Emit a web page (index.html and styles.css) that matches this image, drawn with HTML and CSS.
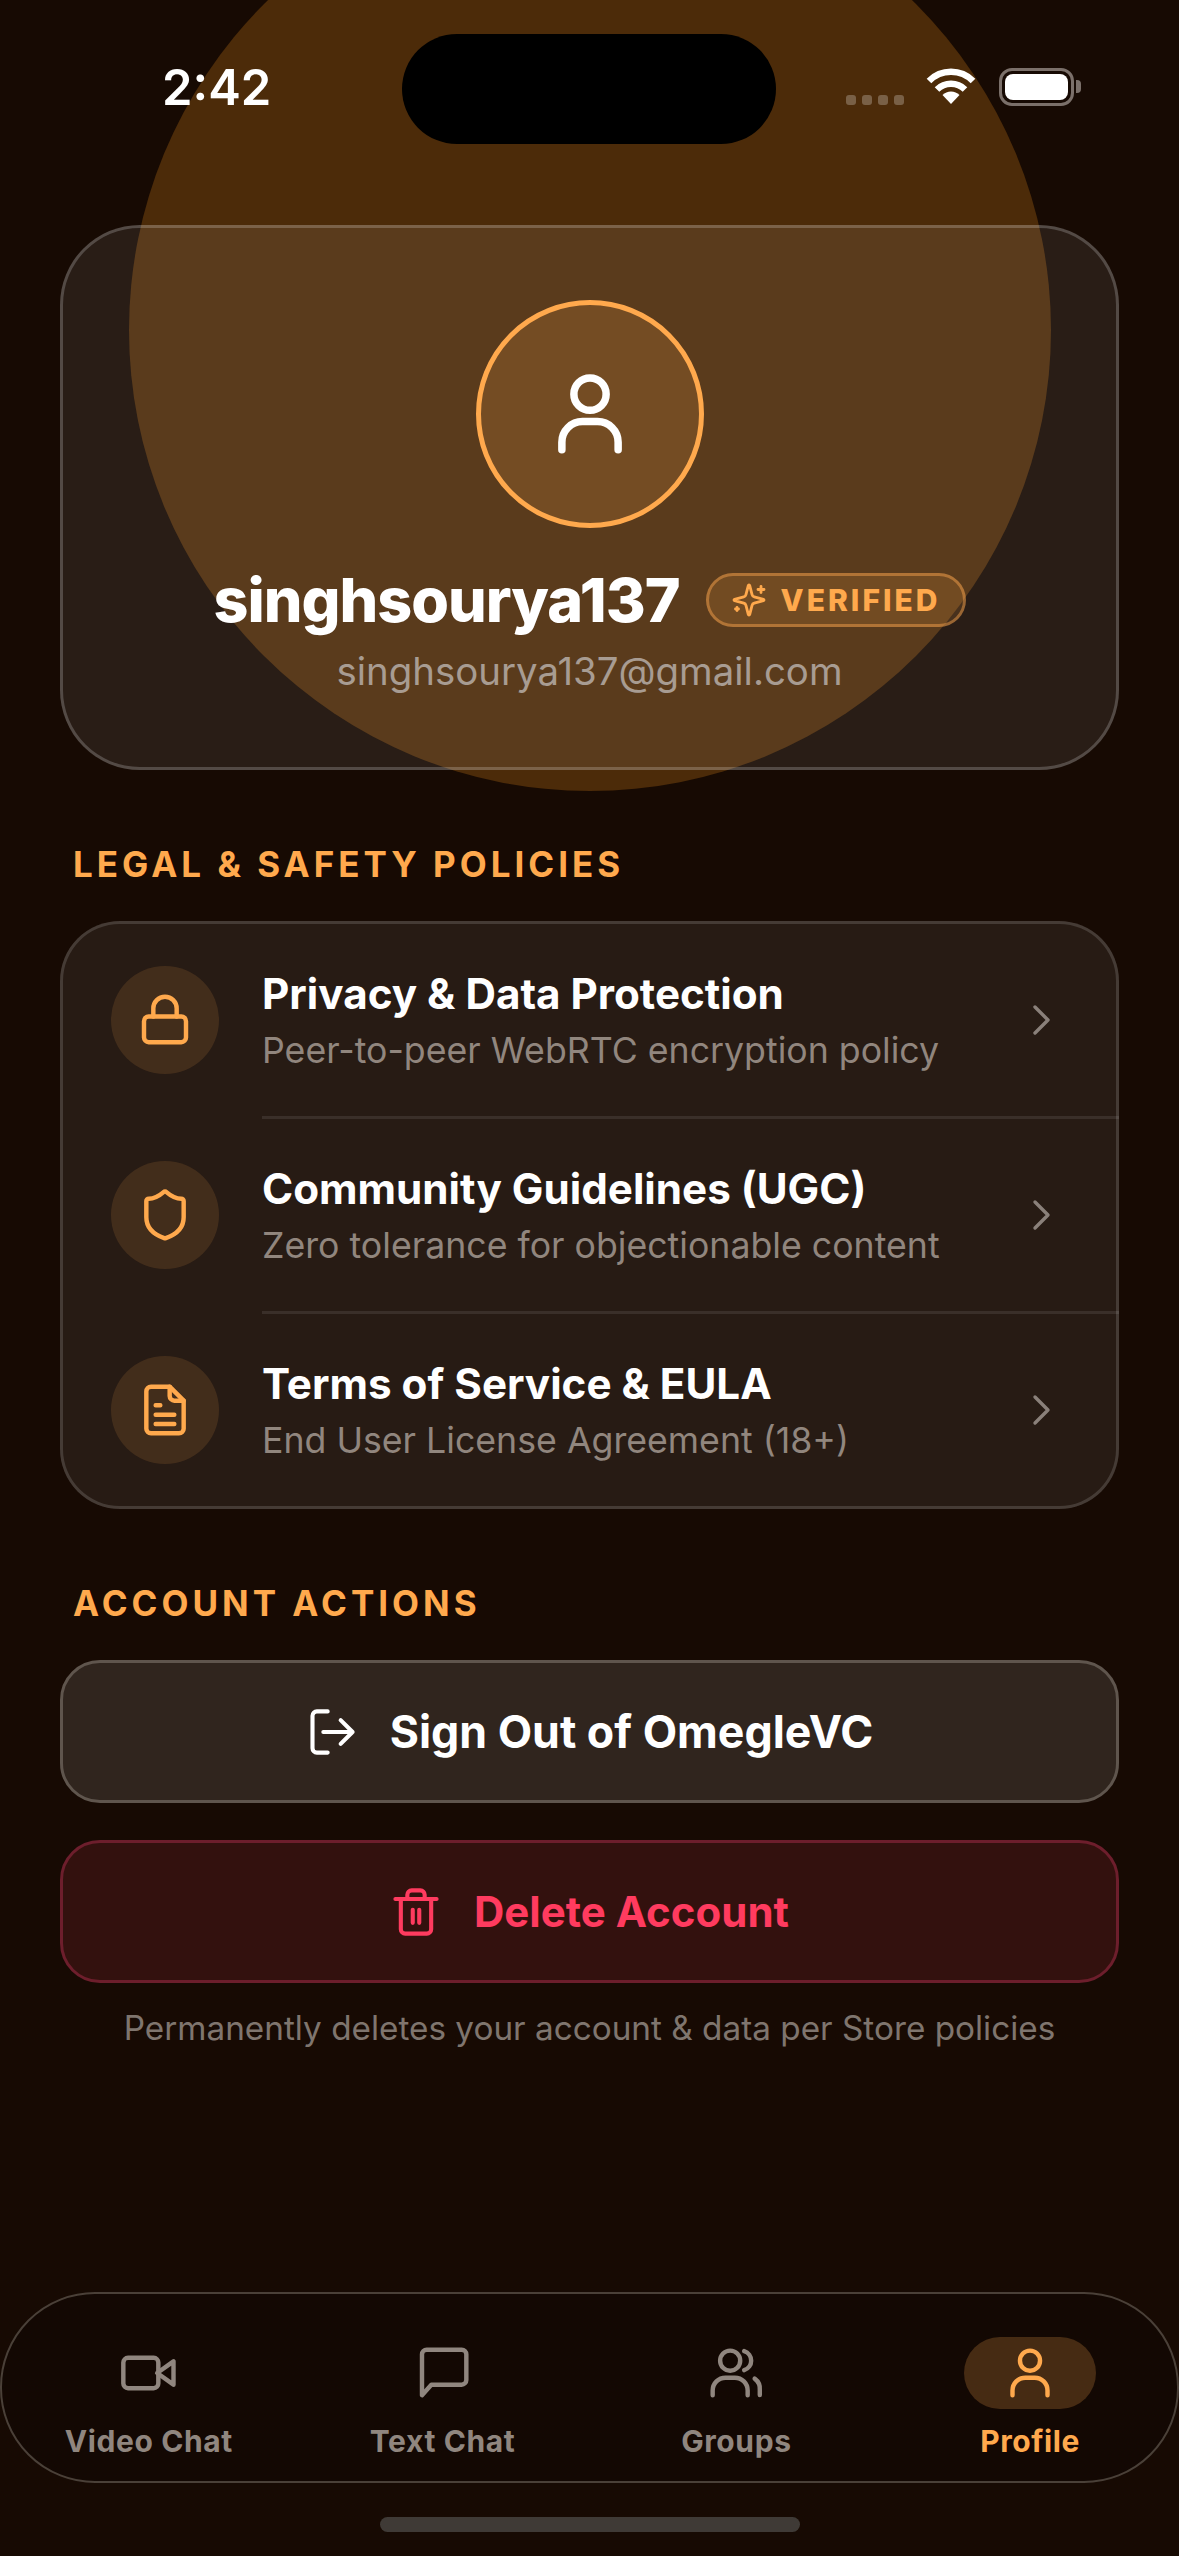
FILE: index.html
```html
<!DOCTYPE html>
<html lang="en">
  <head>
    <meta charset="UTF-8" />
    <meta name="viewport" content="width=device-width, initial-scale=1.0" />
    <title>Profile</title>
    <link rel="stylesheet" href="styles.css">
  </head>

  <body>
    <div class="glow"></div>
    <div class="island"></div>

    <header class="status-bar">
      <span class="status-time">2:42</span>
      <div class="status-icons">
        <div class="signal-dots"><i></i><i></i><i></i><i></i></div>
        <svg class="wifi-icon" viewBox="0 0 52 37">
          <path d="M4 14A31 31 0 0 1 48 14M12 22.5A20 20 0 0 1 40 22.5" fill="none" stroke="#fff" stroke-width="6.5" />
          <path d="M26 37L17.5 28A12 12 0 0 1 34.5 28Z" fill="#fff" />
        </svg>
        <div class="battery"><div class="battery-fill"></div></div>
        <div class="battery-tip"></div>
      </div>
    </header>

    <main class="content">
      <section class="profile-card">
        <div class="avatar">
          <svg class="avatar-icon icon" viewBox="0 0 24 24">
            <circle cx="12" cy="6.7" r="4.3" />
            <path d="M4.5 21.5v-2a5.5 5.5 0 0 1 5.5-5.5h4a5.5 5.5 0 0 1 5.5 5.5v2" />
          </svg>
        </div>
        <div class="name-row">
          <h1 class="profile-name">singhsourya137</h1>
          <span class="verified-badge">
            <svg class="sparkle-icon icon" viewBox="0 0 24 24">
              <path d="M9.937 15.5A2 2 0 0 0 8.5 14.063l-6.135-1.582a.5.5 0 0 1 0-.962L8.5 9.936A2 2 0 0 0 9.937 8.5l1.582-6.135a.5.5 0 0 1 .963 0L14.063 8.5A2 2 0 0 0 15.5 9.937l6.135 1.581a.5.5 0 0 1 0 .964L15.5 14.063a2 2 0 0 0-1.437 1.437l-1.582 6.135a.5.5 0 0 1-.963 0z" />
              <path d="M20 3v4M22 5h-4M4 17v2M5 18H3" />
            </svg>
            VERIFIED
          </span>
        </div>
        <p class="profile-email">singhsourya137@gmail.com</p>
      </section>

      <h2 class="section-title">LEGAL &amp; SAFETY POLICIES</h2>
      <section class="policy-list">
        <div class="policy-row">
          <div class="policy-icon">
            <svg class="icon" viewBox="0 0 24 24">
              <rect x="3" y="10.5" width="18" height="11" rx="2" />
              <path d="M7 10.5V7a5 5 0 0 1 10 0v3.5" />
            </svg>
          </div>
          <div class="policy-text">
            <h3 class="policy-title">Privacy &amp; Data Protection</h3>
            <p class="policy-sub">Peer-to-peer WebRTC encryption policy</p>
          </div>
          <svg class="chevron icon" viewBox="0 0 24 34"><path d="M6 4l13 13L6 30" /></svg>
        </div>
        <div class="policy-row">
          <div class="policy-icon">
            <svg class="icon" viewBox="0 0 24 24">
              <path d="M20 13c0 5-3.5 7.5-7.66 8.95a1 1 0 0 1-.67-.01C7.5 20.5 4 18 4 13V6a1 1 0 0 1 1-1c2 0 4.5-1.2 6.24-2.72a1.17 1.17 0 0 1 1.52 0C14.51 3.81 17 5 19 5a1 1 0 0 1 1 1z" />
            </svg>
          </div>
          <div class="policy-text">
            <h3 class="policy-title">Community Guidelines (UGC)</h3>
            <p class="policy-sub">Zero tolerance for objectionable content</p>
          </div>
          <svg class="chevron icon" viewBox="0 0 24 34"><path d="M6 4l13 13L6 30" /></svg>
        </div>
        <div class="policy-row">
          <div class="policy-icon">
            <svg class="icon" viewBox="0 0 24 24">
              <path d="M14 2H6a2 2 0 0 0-2 2v16a2 2 0 0 0 2 2h12a2 2 0 0 0 2-2V8z" />
              <path d="M14 2v4a2 2 0 0 0 2 2h4M8 10h2M8 14h8M8 18h8" />
            </svg>
          </div>
          <div class="policy-text">
            <h3 class="policy-title">Terms of Service &amp; EULA</h3>
            <p class="policy-sub">End User License Agreement (18+)</p>
          </div>
          <svg class="chevron icon" viewBox="0 0 24 34"><path d="M6 4l13 13L6 30" /></svg>
        </div>
      </section>

      <h2 class="section-title section-title-actions">ACCOUNT ACTIONS</h2>
      <button class="action-button sign-out">
        <svg class="icon" viewBox="0 0 24 24">
          <path d="M10 2.5H5a2 2 0 0 0-2 2v15a2 2 0 0 0 2 2h5" />
          <path d="M8 12h13.5M16 6.5l5.5 5.5-5.5 5.5" />
        </svg>
        Sign Out of OmegleVC
      </button>
      <button class="action-button delete">
        <svg class="icon" viewBox="0 0 24 24">
          <path d="M2.5 6h19M5 6v14a2 2 0 0 0 2 2h10a2 2 0 0 0 2-2V6M8 6V4a2 2 0 0 1 2-2h4a2 2 0 0 1 2 2v2M10.5 11v6M13.5 11v6" />
        </svg>
        Delete Account
      </button>
      <p class="delete-note">Permanently deletes your account &amp; data per Store policies</p>
    </main>

    <nav class="tab-bar">
      <div class="tab">
        <div class="tab-icon">
          <svg class="icon" viewBox="0 0 24 24">
            <rect x="1" y="5.5" width="15" height="13" rx="2" />
            <path d="M15.5 12l7-5v10z" />
          </svg>
        </div>
        <span class="tab-label">Video Chat</span>
      </div>
      <div class="tab">
        <div class="tab-icon">
          <svg class="icon" viewBox="0 0 24 24">
            <path d="M22 15a2 2 0 0 1-2 2H7l-4 4.5V4a2 2 0 0 1 2-2h15a2 2 0 0 1 2 2z" />
          </svg>
        </div>
        <span class="tab-label">Text Chat</span>
      </div>
      <div class="tab">
        <div class="tab-icon">
          <svg class="icon" viewBox="0 0 24 24">
            <circle cx="9.5" cy="6.7" r="4.3" />
            <path d="M2 21.5v-2a5.5 5.5 0 0 1 5.5-5.5h4a5.5 5.5 0 0 1 5.5 5.5v2M15.5 2.6a4.3 4.3 0 0 1 0 8.2M20 14.4a5.5 5.5 0 0 1 2.2 5v2" />
          </svg>
        </div>
        <span class="tab-label">Groups</span>
      </div>
      <div class="tab tab-active">
        <div class="tab-icon">
          <svg class="icon" viewBox="0 0 24 24">
            <circle cx="12" cy="6.7" r="4.3" />
            <path d="M4.5 21.5v-2a5.5 5.5 0 0 1 5.5-5.5h4a5.5 5.5 0 0 1 5.5 5.5v2" />
          </svg>
        </div>
        <span class="tab-label">Profile</span>
      </div>
    </nav>

    <div class="home-indicator"></div>
  </body>
</html>
```

FILE: styles.css
```css
* {
  box-sizing: border-box;
}

body {
  position: relative;
  display: flex;
  flex-direction: column;
  width: 1179px;
  height: 2556px;
  margin: 0;
  overflow: hidden;
  background-color: #170a03;
  color: #fff;
  font-family: Inter, "Noto Sans", sans-serif;
}

h1,
h2,
h3,
p {
  margin: 0;
}

.icon {
  fill: none;
  stroke: currentColor;
  stroke-width: 1.9;
  stroke-linecap: round;
  stroke-linejoin: round;
}

.glow {
  position: absolute;
  left: 129px;
  top: -131px;
  width: 922px;
  height: 922px;
  border-radius: 50%;
  background-color: #4c2b09;
}

.island {
  position: absolute;
  left: 402px;
  top: 34px;
  width: 374px;
  height: 110px;
  border-radius: 55px;
  background-color: #000;
}

.status-bar {
  position: relative;
  display: flex;
  justify-content: space-between;
  height: 225px;
  padding: 58px 98px 0 162px;
}

.status-time {
  font-size: 49px;
  font-weight: 600;
  line-height: 60px;
}

.status-icons {
  display: flex;
  align-items: flex-start;
  height: 60px;
  padding-top: 9px;
}

.signal-dots {
  display: flex;
  gap: 6px;
  margin: 28px 21px 0 0;
}

.signal-dots i {
  width: 10px;
  height: 10px;
  border-radius: 3px;
  background-color: rgba(255, 255, 255, 0.25);
}

.wifi-icon {
  width: 52px;
  height: 37px;
  margin-right: 22px;
}

.battery {
  width: 75px;
  height: 38px;
  margin-top: 1px;
  padding: 3px;
  border: 3px solid #7b706a;
  border-radius: 13px;
}

.battery-fill {
  height: 100%;
  border-radius: 8px;
  background-color: #fff;
}

.battery-tip {
  width: 5px;
  height: 13px;
  margin: 13px 0 0 2px;
  border-radius: 0 4px 4px 0;
  background-color: #7b706a;
}

.content {
  position: relative;
  flex: 1;
  padding: 0 60px;
}

.profile-card {
  display: flex;
  flex-direction: column;
  align-items: center;
  height: 545px;
  padding-top: 72px;
  border: 3px solid rgba(255, 255, 255, 0.2);
  border-radius: 80px;
  background-color: rgba(255, 255, 255, 0.08);
}

.avatar {
  display: flex;
  align-items: center;
  justify-content: center;
  width: 228px;
  height: 228px;
  border: 5px solid #ffa94d;
  border-radius: 50%;
  background-color: rgba(255, 169, 77, 0.16);
}

.avatar-icon {
  width: 90px;
  height: 90px;
  color: #fff;
  stroke-width: 2;
}

.name-row {
  display: flex;
  align-items: center;
  gap: 26px;
  margin-top: 37px;
}

.profile-name {
  font-size: 61px;
  font-weight: 800;
  line-height: 70px;
  letter-spacing: -1px;
}

.verified-badge {
  display: flex;
  align-items: center;
  gap: 14px;
  height: 54px;
  padding: 0 22px;
  border: 3px solid rgba(255, 169, 77, 0.45);
  border-radius: 27px;
  background-color: rgba(255, 169, 77, 0.15);
  color: #ffa94d;
  font-size: 30px;
  font-weight: 800;
  letter-spacing: 3px;
}

.sparkle-icon {
  width: 36px;
  height: 36px;
}

.profile-email {
  margin-top: 14px;
  color: #a89c92;
  font-size: 38.4px;
  line-height: 44px;
}

.section-title {
  margin: 74px 0 0 13px;
  color: #ffa94d;
  font-size: 35px;
  font-weight: 700;
  line-height: 40px;
  letter-spacing: 4px;
}

.policy-list {
  margin-top: 37px;
  padding: 1px 0 2px;
  border-radius: 60px;
  background-color: rgba(255, 255, 255, 0.07);
  box-shadow: inset 0 0 0 3px rgba(255, 255, 255, 0.14);
}

.policy-row {
  position: relative;
  display: flex;
  align-items: center;
  height: 195px;
  padding: 0 66px 0 51px;
}

.policy-row + .policy-row::before {
  content: "";
  position: absolute;
  left: 202px;
  right: 0;
  top: -1px;
  height: 3px;
  background-color: rgba(255, 255, 255, 0.09);
}

.policy-icon {
  display: flex;
  align-items: center;
  justify-content: center;
  flex: none;
  width: 108px;
  height: 108px;
  margin-right: 43px;
  border-radius: 50%;
  background-color: rgba(255, 169, 77, 0.13);
  color: #ffa94d;
}

.policy-icon svg {
  width: 56px;
  height: 56px;
}

.policy-text {
  flex: 1;
}

.policy-title {
  font-size: 42.2px;
  font-weight: 700;
  line-height: 52px;
}

.policy-sub {
  margin-top: 8px;
  color: #91867e;
  font-size: 35.7px;
  line-height: 44px;
}

.chevron {
  width: 24px;
  height: 34px;
  color: #8a807a;
  stroke-width: 3.4;
}

.action-button {
  display: flex;
  align-items: center;
  justify-content: center;
  gap: 32px;
  width: 100%;
  height: 143px;
  border-radius: 40px;
  font-family: inherit;
  font-weight: 700;
}

.action-button svg {
  width: 52px;
  height: 52px;
}

.sign-out {
  margin-top: 37px;
  border: 3px solid #5f554d;
  background-color: #30251e;
  color: #fff;
  font-size: 44.7px;
}

.delete {
  margin-top: 37px;
  border: 3px solid #6d1e2c;
  background-color: #33110e;
  color: #ff3b5f;
  font-size: 42px;
}

.delete-note {
  margin-top: 25px;
  color: #7f756e;
  font-size: 33.3px;
  line-height: 40px;
  text-align: center;
}

.tab-bar {
  position: absolute;
  left: 0;
  right: 0;
  top: 2292px;
  display: grid;
  grid-template-columns: repeat(4, 1fr);
  height: 191px;
  padding-top: 43px;
  border: 2px solid #4a4038;
  border-radius: 95px;
  background-color: #130803;
}

.tab {
  display: flex;
  flex-direction: column;
  align-items: center;
  color: #90867f;
}

.tab-icon {
  display: flex;
  align-items: center;
  justify-content: center;
  width: 132px;
  height: 72px;
  border-radius: 36px;
}

.tab-icon svg {
  width: 56px;
  height: 56px;
}

.tab-label {
  margin-top: 13px;
  font-size: 30px;
  font-weight: 700;
  line-height: 38px;
  letter-spacing: 0.6px;
}

.tab-active {
  color: #ffa94d;
}

.tab-active .tab-icon {
  background-color: rgba(255, 169, 77, 0.22);
}

.home-indicator {
  position: absolute;
  left: 380px;
  top: 2517px;
  width: 420px;
  height: 15px;
  border-radius: 8px;
  background-color: #3f3a36;
}
```
